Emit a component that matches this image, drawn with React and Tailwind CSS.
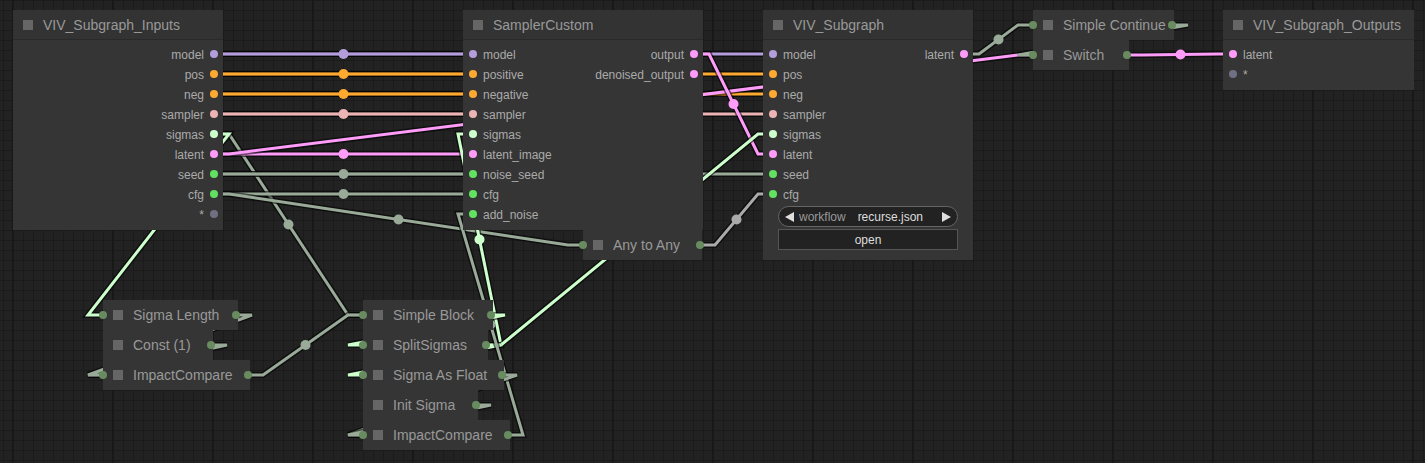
import React from 'react';

// link colours by type
const P = '#b39ddb';
const O = '#ffa931';
const S = '#ecb4b4';
const L = '#ff9cf9';
const GS = '#cdffcd';
const G = '#99aa99';
const A = '#aaaaaa';

// [fromX, fromY, toX, toY, colour] - drawn LiteGraph "linear" style
const links = [
  [214, 54, 473, 54, P], [214, 54, 773, 54, P],
  [214, 74, 473, 74, O], [214, 74, 773, 74, O],
  [214, 94, 473, 94, O], [214, 94, 773, 94, O],
  [214, 114, 473, 114, S], [214, 114, 773, 114, S],
  [214, 134, 363, 315, G], [214, 134, 103, 315, GS],
  [214, 154, 473, 154, L], [214, 154, 1033, 55, L],
  [214, 174, 473, 174, G], [214, 174, 773, 174, G],
  [214, 194, 473, 194, G], [214, 194, 583, 245, G],
  [700, 245, 773, 194, A],
  [694, 54, 773, 154, L],
  [486, 345, 473, 134, GS], [486, 345, 773, 134, GS], [486, 345, 363, 375, GS],
  [508, 435, 473, 214, G],
  [248, 375, 363, 315, G],
  [964, 54, 1033, 25, G],
  [1128, 55, 1233, 54, L],
  [212, 345, 103, 375, G], [237, 315, 103, 375, G],
  [490, 315, 363, 345, GS],
  [502, 375, 363, 435, G], [476, 405, 363, 435, G],
  [1173, 25, 1033, 55, G],
];

const dot = {
  model: 'bg-[#b39ddb]',
  cond: 'bg-[#ffa931]',
  sampler: 'bg-[#ecb4b4]',
  sigmas: 'bg-[#cdffcd]',
  latent: 'bg-[#ff9cf9]',
  num: 'bg-[#62e262]',
  any: 'bg-[#707084]',
};

const path = ([x1, y1, x2, y2]) => `M${x1} ${y1} L${x1 + 15} ${y1} L${x2 - 15} ${y2} L${x2} ${y2}`;

const Links = () => (
  <svg className="absolute inset-0" width="1425" height="463">
    {links.map((l, i) => (
      <g key={i}>
        <path d={path(l)} fill="none" stroke="rgba(0,0,0,0.55)" strokeWidth="6" />
        <path d={path(l)} fill="none" stroke={l[4]} strokeWidth="3" />
      </g>
    ))}
    {links.map(([x1, y1, x2, y2, c], i) => (
      <circle key={i} cx={(x1 + x2) / 2} cy={(y1 + y2) / 2} r="5" fill={c} />
    ))}
  </svg>
);

const InRow = ({ label, c }) => (
  <div className="flex items-center h-5 pl-[6px]">
    <span className={`w-2 h-2 rounded-full ${c}`} />
    <span className="ml-[6px] pt-[1px] text-[12px] text-[#aaa]">{label}</span>
  </div>
);

const OutRow = ({ label, c }) => (
  <div className="flex items-center justify-end h-5 pr-[5px]">
    <span className="pt-[1px] text-[12px] text-[#aaa]">{label}</span>
    <span className={`ml-[6px] w-2 h-2 rounded-full ${c}`} />
  </div>
);

const Node = ({ pos, title, inputs = [], outputs = [], children }) => (
  <div className={`absolute bg-[#353535] ${pos}`}>
    <div className="h-[30px] flex items-center bg-[#333] border-b border-[#2a2a2a]">
      <span className="ml-[10px] w-[10px] h-[10px] bg-[#666]" />
      <span className="ml-[10px] pt-[1px] text-[14px] text-[#999]">{title}</span>
    </div>
    <div className="flex pt-[4px]">
      <div className="flex-1">
        {inputs.map(([l, c]) => <InRow key={l} label={l} c={c} />)}
      </div>
      <div>
        {outputs.map(([l, c]) => <OutRow key={l} label={l} c={c} />)}
      </div>
    </div>
    {children}
  </div>
);

// collapsed node
const Mini = ({ pos, title, inDot, outDot }) => (
  <div className={`absolute h-[30px] flex items-center bg-[#353535] ${pos}`}>
    {inDot && <span className="absolute left-[-4px] top-[11px] w-2 h-2 rounded-full bg-[#688c5f]" />}
    <span className="ml-[10px] w-[10px] h-[10px] bg-[#666]" />
    <span className="ml-[10px] pt-[1px] text-[14px] text-[#999] whitespace-nowrap">{title}</span>
    {outDot && <span className="absolute right-[-2px] top-[11px] w-2 h-2 rounded-full bg-[#688c5f]" />}
  </div>
);

const App = () => {
  return (
    <div className="relative w-[1425px] h-[463px] overflow-hidden bg-[#222] font-['Liberation_Sans',Arial,sans-serif] [background-image:linear-gradient(90deg,#181818_2px,transparent_2px),linear-gradient(90deg,#1b1b1b_1px,transparent_1px),linear-gradient(#1b1b1b_1px,transparent_1px)] [background-size:100px_100px,10px_10px,10px_10px] [background-position:12px_0,3px_0,3px_0]">
      <Links />

      <Node
        pos="left-[13px] top-[10px] w-[210px] h-[220px]"
        title="VIV_Subgraph_Inputs"
        outputs={[
          ['model', dot.model], ['pos', dot.cond], ['neg', dot.cond], ['sampler', dot.sampler],
          ['sigmas', dot.sigmas], ['latent', dot.latent], ['seed', dot.num], ['cfg', dot.num], ['*', dot.any],
        ]}
      />

      <Node
        pos="left-[463px] top-[10px] w-[240px] h-[220px]"
        title="SamplerCustom"
        inputs={[
          ['model', dot.model], ['positive', dot.cond], ['negative', dot.cond], ['sampler', dot.sampler],
          ['sigmas', dot.sigmas], ['latent_image', dot.latent], ['noise_seed', dot.num], ['cfg', dot.num], ['add_noise', dot.num],
        ]}
        outputs={[['output', dot.latent], ['denoised_output', dot.latent]]}
      />

      <Node
        pos="left-[763px] top-[10px] w-[210px] h-[250px]"
        title="VIV_Subgraph"
        inputs={[
          ['model', dot.model], ['pos', dot.cond], ['neg', dot.cond], ['sampler', dot.sampler],
          ['sigmas', dot.sigmas], ['latent', dot.latent], ['seed', dot.num], ['cfg', dot.num],
        ]}
        outputs={[['latent', dot.latent]]}
      >
        <div className="mx-[15px] mt-[2px] h-[21px] rounded-full border border-[#666] bg-[#222] flex items-center pl-[6px] pr-[6px] text-[12px]">
          <svg width="10" height="10" viewBox="0 0 10 10"><polygon points="9,0 9,10 0,5" fill="#ddd" /></svg>
          <span className="ml-[4px] text-[#999]">workflow</span>
          <span className="ml-auto mr-[18px] text-[#ddd]">recurse.json</span>
          <svg width="10" height="10" viewBox="0 0 10 10"><polygon points="1,0 1,10 10,5" fill="#ddd" /></svg>
        </div>
        <div className="mx-[15px] mt-[2px] h-[21px] border border-[#555] bg-[#222] flex items-center justify-center text-[12px] text-[#ddd]">
          open
        </div>
      </Node>

      <Node
        pos="left-[1223px] top-[10px] w-[191px] h-[80px]"
        title="VIV_Subgraph_Outputs"
        inputs={[['latent', dot.latent], ['*', dot.any]]}
      />

      <Mini pos="left-[583px] top-[230px] w-[119px]" title="Any to Any" inDot outDot />
      <Mini pos="left-[1033px] top-[10px] w-[141px]" title="Simple Continue" inDot outDot />
      <Mini pos="left-[1033px] top-[40px] w-[96px]" title="Switch" inDot outDot />

      <Mini pos="left-[103px] top-[300px] w-[135px]" title="Sigma Length" inDot outDot />
      <Mini pos="left-[103px] top-[330px] w-[110px]" title="Const (1)" outDot />
      <Mini pos="left-[103px] top-[360px] w-[147px]" title="ImpactCompare" inDot outDot />

      <Mini pos="left-[363px] top-[300px] w-[130px]" title="Simple Block" inDot outDot />
      <Mini pos="left-[363px] top-[330px] w-[125px]" title="SplitSigmas" inDot outDot />
      <Mini pos="left-[363px] top-[360px] w-[141px]" title="Sigma As Float" inDot outDot />
      <Mini pos="left-[363px] top-[390px] w-[115px]" title="Init Sigma" outDot />
      <Mini pos="left-[363px] top-[420px] w-[147px]" title="ImpactCompare" inDot outDot />
    </div>
  );
};

export default App;
